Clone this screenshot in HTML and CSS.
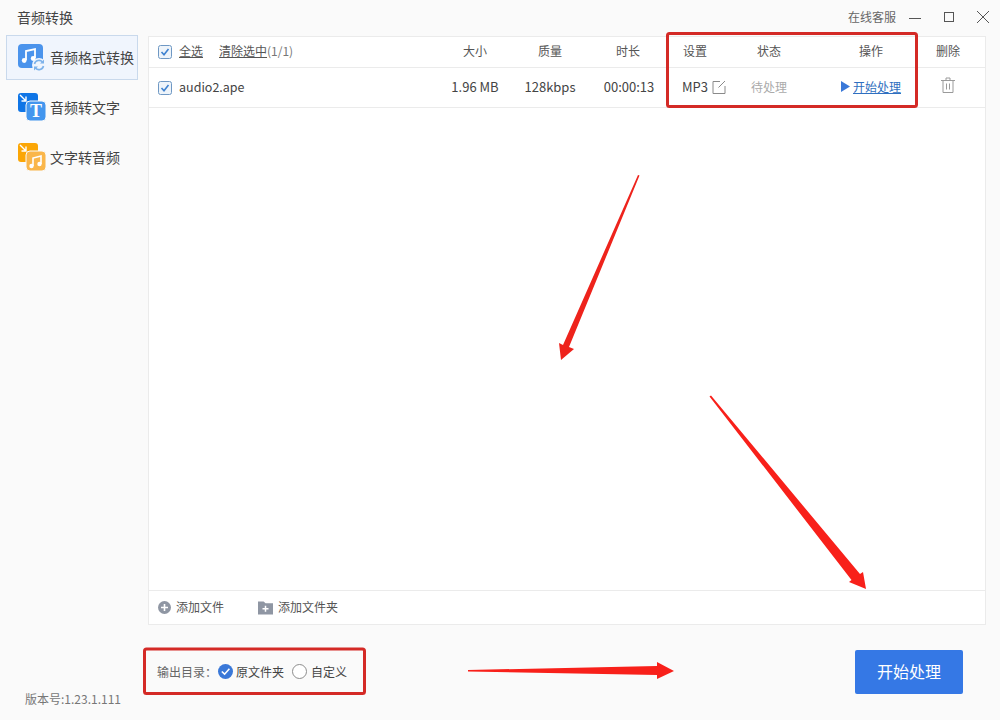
FILE: index.html
```html
<!doctype html>
<html>
<head>
    <meta charset="utf-8">
    <title>音频转换</title>
    <link rel="stylesheet" href="styles.css">
</head>
<body>
<div class="app">
    <div class="titlebar">
        <div class="app-name">音频转换</div>
        <div class="service">在线客服</div>
        <svg class="win-btn" width="14" height="14" viewBox="0 0 14 14"><path d="M1 7.5H13" stroke="#555" fill="none"/></svg>
        <svg class="win-btn win-max" width="12" height="12" viewBox="0 0 12 12"><rect x="1.5" y="1.5" width="9" height="9" stroke="#555" fill="none"/></svg>
        <svg class="win-btn win-close" width="14" height="14" viewBox="0 0 14 14"><path d="M1 1L13 13M13 1L1 13" stroke="#555" fill="none"/></svg>
    </div>
    <div class="main">
        <div class="sidebar">
            <div class="nav-item active">
                <svg class="nav-icon" width="28" height="30" viewBox="0 0 28 30">
                    <rect x="0" y="1" width="25" height="24" rx="4" fill="#4a93ec"/>
                    <path d="M8 17V8L17 6V15" stroke="#fff" stroke-width="1.8" fill="none"/>
                    <circle cx="6.2" cy="17.5" r="2.4" fill="#fff"/>
                    <circle cx="15.2" cy="15.5" r="2.4" fill="#fff"/>
                    <circle cx="21" cy="22" r="7" fill="#f0f5fd"/>
                    <path d="M16.5 21A4.6 4.6 0 0 1 24.5 19M25.5 23A4.6 4.6 0 0 1 17.5 25" stroke="#7db2ea" stroke-width="1.6" fill="none"/>
                    <path d="M26 16.5V20.5H22ZM16 27.5V23.5H20Z" fill="#7db2ea"/>
                </svg>
                <span>音频格式转换</span>
            </div>
            <div class="nav-item">
                <svg class="nav-icon" width="28" height="30" viewBox="0 0 28 30">
                    <rect x="0" y="0" width="20" height="19" rx="3" fill="#0f75e6"/>
                    <path d="M2 2L8 8M8 3.5V8H3.5" stroke="#fff" stroke-width="1.4" fill="none"/>
                    <rect x="8" y="8" width="20" height="20" rx="4" stroke="#f9f9f9" fill="#4396ee"/>
                    <text class="icon-t" x="18" y="24">T</text>
                </svg>
                <span>音频转文字</span>
            </div>
            <div class="nav-item">
                <svg class="nav-icon" width="28" height="30" viewBox="0 0 28 30">
                    <rect x="0" y="0" width="20" height="19" rx="3" fill="#fba606"/>
                    <path d="M2 2L8 8M8 3.5V8H3.5" stroke="#fff" stroke-width="1.4" fill="none"/>
                    <rect x="8" y="8" width="20" height="20" rx="4" stroke="#f9f9f9" fill="#fab64a"/>
                    <path d="M15 23V15L23 13V21" stroke="#fff" stroke-width="1.6" fill="none"/>
                    <circle cx="13.5" cy="23" r="2.2" fill="#fff"/>
                    <circle cx="21.5" cy="21" r="2.2" fill="#fff"/>
                </svg>
                <span>文字转音频</span>
            </div>
            <div class="version">版本号:1.23.1.111</div>
        </div>
        <div class="content">
            <div class="panel">
                <div class="row head-row">
                    <div class="name-cell">
                        <svg class="check" width="14" height="14" viewBox="0 0 14 14"><rect x="0.5" y="0.5" width="13" height="13" rx="2" fill="#eef4fa" stroke="#6f98c4"/><path d="M3.5 7L6 9.8L10.5 4" stroke="#3f82d0" stroke-width="1.6" fill="none"/></svg>
                        <u class="select-all">全选</u>
                        <u>清除选中</u><span class="count">(1/1)</span>
                    </div>
                    <div>大小</div>
                    <div>质量</div>
                    <div>时长</div>
                    <div>设置</div>
                    <div>状态</div>
                    <div>操作</div>
                    <div>删除</div>
                </div>
                <div class="row file-row">
                    <div class="name-cell">
                        <svg class="check" width="14" height="14" viewBox="0 0 14 14"><rect x="0.5" y="0.5" width="13" height="13" rx="2" fill="#eef4fa" stroke="#6f98c4"/><path d="M3.5 7L6 9.8L10.5 4" stroke="#3f82d0" stroke-width="1.6" fill="none"/></svg>
                        <span class="file-name">audio2.ape</span>
                    </div>
                    <div class="data-cell">1.96 MB</div>
                    <div class="data-cell">128kbps</div>
                    <div class="data-cell time-cell">00:00:13</div>
                    <div class="data-cell format-cell">
                        MP3
                        <svg width="14" height="14" viewBox="0 0 14 14"><path d="M8 1.5H1V13.5H13V6M13 1L6.5 7.5" stroke="#8a8a8a" fill="none"/></svg>
                    </div>
                    <div class="pending">待处理</div>
                    <div class="action-cell">
                        <svg width="9" height="11" viewBox="0 0 9 11"><path d="M0 0L9 5.5L0 11Z" fill="#3a78d8"/></svg>
                        <u class="start-link">开始处理</u>
                    </div>
                    <div>
                        <svg class="trash" width="14" height="16" viewBox="0 0 14 16"><path d="M0 3.5H14M5 3.5V1H9V3.5M2 3.5V15.5H12V3.5M5.5 6.5V12.5M8.5 6.5V12.5" stroke="#9a9a9a" fill="none"/></svg>
                    </div>
                </div>
                <div class="list-space"></div>
                <div class="panel-foot">
                    <div class="add-btn">
                        <svg width="13" height="13" viewBox="0 0 13 13"><circle cx="6.5" cy="6.5" r="6.5" fill="#8f96a3"/><path d="M6.5 3V10M3 6.5H10" stroke="#fff" stroke-width="1.6"/></svg>
                        <span class="add-text">添加文件</span>
                    </div>
                    <div class="add-btn">
                        <svg width="15" height="14" viewBox="0 0 16 14"><path d="M0 0H6L8 2H16V14H0Z" fill="#8f96a3"/><path d="M8 4.5V11M4.8 7.8H11.2" stroke="#fff" stroke-width="1.6"/></svg>
                        <span class="add-text">添加文件夹</span>
                    </div>
                </div>
            </div>
            <div class="footer">
                <div class="output">
                    <span class="output-label">输出目录：</span>
                    <svg width="15" height="15" viewBox="0 0 15 15"><circle cx="7.5" cy="7.5" r="7.5" fill="#3a78d8"/><path d="M3.8 7.5L6.6 10.2L11.4 4.8" stroke="#fff" stroke-width="1.6" fill="none"/></svg>
                    <span class="output-opt">原文件夹</span>
                    <svg class="radio-off" width="15" height="15" viewBox="0 0 15 15"><circle cx="7.5" cy="7.5" r="7" fill="#fff" stroke="#8c8c8c"/></svg>
                    <span class="output-opt">自定义</span>
                </div>
                <div class="start-btn">开始处理</div>
            </div>
        </div>
    </div>
    <svg class="marks" width="1000" height="720" viewBox="0 0 1000 720">
        <rect x="667.5" y="33.5" width="249" height="73" rx="2" fill="none" stroke="#d42a26" stroke-width="3"/>
        <rect x="144.5" y="649" width="220" height="44.5" rx="2" fill="none" stroke="#d42a26" stroke-width="3"/>
        <path d="M639.5 175.5L569 347L574 349L561 360L559 343L563 345L638 175Z" fill="#ee231c"/>
        <path d="M711 395.5L860 574L863 572L866 589L849 582L851.5 580L709.5 396.5Z" fill="#f8201a"/>
        <path d="M468 670L657 666V662L674 671L657 679V675L468 671.5Z" fill="#f8201a"/>
    </svg>
</div>
</body>
</html>
```

FILE: styles.css
```css
html, body {
    margin: 0;
    padding: 0;
}

body {
    font-family: "Noto Sans CJK SC", "Noto Sans", sans-serif;
    font-size: 12px;
    color: #555;
    background-color: #fafafa;
}

svg {
    display: block;
    flex: none;
}

.app {
    position: relative;
    width: 1000px;
    height: 720px;
    display: flex;
    flex-direction: column;
    overflow: hidden;
}

.titlebar {
    height: 35px;
    flex: none;
    display: flex;
    align-items: center;
    padding: 0 10px 0 17px;
}

.app-name {
    font-size: 14px;
    color: #444;
    padding-bottom: 2px;
}

.service {
    margin-left: auto;
    margin-right: 12px;
    color: #666;
    padding-bottom: 2px;
}

.win-max {
    margin-left: 21px;
    margin-top: -1px;
}

.win-close {
    margin-left: 21px;
    margin-top: -1px;
}

.main {
    flex: 1;
    display: flex;
    min-height: 0;
}

.sidebar {
    width: 132px;
    padding-left: 6px;
    margin-right: 10px;
    display: flex;
    flex-direction: column;
    gap: 5px;
}

.nav-item {
    height: 45px;
    box-sizing: border-box;
    padding-left: 12px;
    display: flex;
    align-items: center;
    gap: 4px;
    font-size: 14px;
    color: #444;
    white-space: nowrap;
}

.nav-item span {
    padding-bottom: 2px;
}

.nav-item.active {
    background-color: #f0f5fd;
    border: 1px solid #c9d9ec;
    padding-left: 11px;
}

.icon-t {
    font-family: "Liberation Serif", serif;
    font-size: 18px;
    font-weight: bold;
    fill: #fff;
    text-anchor: middle;
}

.version {
    margin-top: auto;
    padding: 0 0 13px 19px;
    color: #777;
}

.content {
    flex: 1;
    display: flex;
    flex-direction: column;
    min-width: 0;
}

.panel {
    flex: 1;
    margin: 1px 14px 0 0;
    background-color: #fff;
    border: 1px solid #ebebeb;
    display: flex;
    flex-direction: column;
    min-height: 0;
}

.row {
    display: grid;
    grid-template-columns: 290px 72px 78px 78px 56px 92px 112px 42px;
    align-items: center;
    text-align: center;
    border-bottom: 1px solid #ebebeb;
    flex: none;
    box-sizing: border-box;
}

.head-row {
    height: 31px;
    padding-bottom: 4px;
}

.head-row .check {
    margin-top: 4px;
}

.file-row {
    height: 40px;
    padding-bottom: 2px;
    color: #444;
}

.file-row .check {
    margin-top: 2px;
}

.file-row > div {
    display: flex;
    justify-content: center;
    align-items: center;
}

.row .name-cell {
    display: flex;
    align-items: center;
    justify-content: flex-start;
    padding-left: 9px;
}

.check {
    margin-right: 7px;
}

.select-all {
    margin-right: 16px;
}

.count {
    color: #777;
}

.file-name {
    font-size: 12.5px;
}

.data-cell {
    font-size: 13px;
}

.file-row .time-cell {
    padding-left: 2px;
}

.file-row .format-cell {
    justify-content: flex-start;
    padding-left: 15px;
    gap: 4px;
    white-space: nowrap;
}

.file-row .pending {
    color: #aaa;
}

.action-cell {
    gap: 3px;
}

.start-link {
    color: #2f6fc0;
}

.trash {
    margin-bottom: 3px;
}

.list-space {
    flex: 1;
}

.panel-foot {
    height: 34px;
    flex: none;
    border-top: 1px solid #ebebeb;
    box-sizing: border-box;
    display: flex;
    align-items: center;
    gap: 34px;
    padding-left: 9px;
}

.add-btn {
    display: flex;
    align-items: center;
    gap: 5px;
}

.add-text {
    padding-bottom: 2px;
}

.footer {
    height: 95px;
    box-sizing: border-box;
    flex: none;
    display: flex;
    align-items: center;
    justify-content: space-between;
    padding: 0 37px 2px 9px;
}

.output {
    display: flex;
    align-items: center;
}

.output-label {
    color: #666;
    margin-right: 1px;
}

.output-opt {
    margin-left: 3px;
    color: #444;
}

.radio-off {
    margin-left: 8px;
    margin-right: 1px;
}

.start-btn {
    width: 108px;
    height: 44px;
    line-height: 42px;
    text-align: center;
    font-size: 16px;
    color: #fff;
    background-color: #3578e5;
    border-radius: 2px;
}

.marks {
    position: absolute;
    left: 0;
    top: 0;
    pointer-events: none;
}
```
